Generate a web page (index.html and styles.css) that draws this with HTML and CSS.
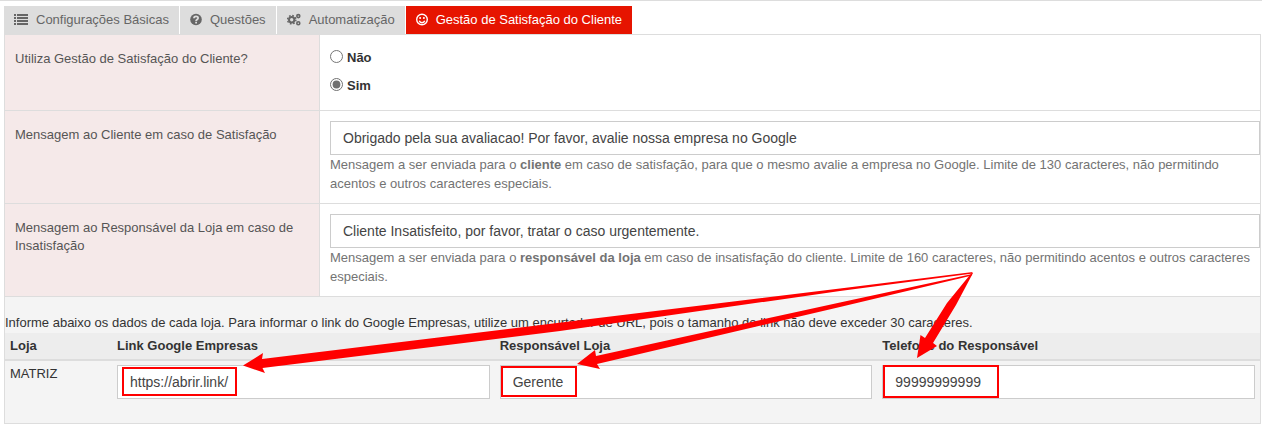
FILE: index.html
```html
<!DOCTYPE html>
<html lang="pt-BR">
<head>
<meta charset="utf-8">
<title>Gestão de Satisfação do Cliente</title>
<link rel="stylesheet" href="styles.css">
</head>
<body>
<main class="page">
  <nav class="tabs">
    <a class="tab" href="#config"><svg class="icon" viewBox="0 0 14 14"><path d="M0 1h2v2H0zM3 1h11v2H3zM0 4h2v2H0zM3 4h11v2H3zM0 7h2v2H0zM3 7h11v2H3zM0 10h2v2H0zM3 10h11v2H3z"/></svg>Configurações Básicas</a>
    <a class="tab" href="#questoes"><svg class="icon round" viewBox="0 0 12 14"><circle cx="6" cy="6.500" r="5.800"/><path class="cut" d="M4 5.200C4 2.900 8.100 2.900 8.100 5C8.100 6.500 6.100 6.300 6.100 7.900M6.100 8.700v1.800"/></svg>Questões</a>
    <a class="tab" href="#auto"><svg class="icon" viewBox="0 0 14 14"><circle class="gear" cx="4.700" cy="6.700" r="2.700"/><circle class="teeth" cx="4.700" cy="6.700" r="4.200"/><circle class="gear small" cx="11.300" cy="3.100" r="1.500"/><circle class="gear small" cx="11.300" cy="10.300" r="1.500"/></svg>Automatização</a>
    <a class="tab active" href="#satisfacao" aria-current="page"><svg class="icon round" viewBox="0 0 12 14"><circle class="line" cx="6" cy="6.500" r="5.300"/><path class="line" d="M3.300 7.800C4 10.300 8 10.300 8.700 7.800"/><circle cx="4.100" cy="4.900" r="1"/><circle cx="7.900" cy="4.900" r="1"/></svg>Gestão de Satisfação do Cliente</a>
  </nav>
  <form class="panel">
    <div class="row">
      <div class="label" id="usa">Utiliza Gestão de Satisfação do Cliente?</div>
      <div class="field choices" role="radiogroup" aria-labelledby="usa">
        <label class="choice"><input type="radio" name="usa" value="nao">Não</label>
        <label class="choice"><input type="radio" name="usa" value="sim" checked>Sim</label>
      </div>
    </div>
    <div class="row">
      <label class="label" for="msg-cliente">Mensagem ao Cliente em caso de Satisfação</label>
      <div class="field">
        <input class="text" id="msg-cliente" type="text" value="Obrigado pela sua avaliacao! Por favor, avalie nossa empresa no Google">
        <p class="help">Mensagem a ser enviada para o <b>cliente</b> em caso de satisfação, para que o mesmo avalie a empresa no Google. Limite de 130 caracteres, não permitindo acentos e outros caracteres especiais.</p>
      </div>
    </div>
    <div class="row">
      <label class="label" for="msg-loja">Mensagem ao Responsável da Loja em caso de Insatisfação</label>
      <div class="field">
        <input class="text" id="msg-loja" type="text" value="Cliente Insatisfeito, por favor, tratar o caso urgentemente.">
        <p class="help">Mensagem a ser enviada para o <b>responsável da loja</b> em caso de insatisfação do cliente. Limite de 160 caracteres, não permitindo acentos e outros caracteres especiais.</p>
      </div>
    </div>
    <section class="stores">
      <p class="intro">Informe abaixo os dados de cada loja. Para informar o link do Google Empresas, utilize um encurtador de URL, pois o tamanho do link não deve exceder 30 caracteres.</p>
      <table class="table">
        <thead><tr><th class="store">Loja</th><th id="h-link">Link Google Empresas</th><th id="h-resp">Responsável Loja</th><th id="h-tel">Telefone do Responsável</th></tr></thead>
        <tbody><tr>
          <td>MATRIZ</td>
          <td><input class="text" type="text" aria-labelledby="h-link" value="https://abrir.link/"></td>
          <td><input class="text" type="text" aria-labelledby="h-resp" value="Gerente"></td>
          <td><input class="text" type="text" aria-labelledby="h-tel" value="99999999999"></td>
        </tr></tbody>
      </table>
    </section>
  </form>
  <svg class="notes" width="1262" height="431" viewBox="0 0 1262 431" aria-hidden="true">
    <g class="box"><rect x="123" y="368" width="113" height="27"/><rect x="502" y="367" width="74" height="29"/><rect x="884" y="366" width="114" height="31"/></g>
    <path d="M973 272L840 288.500L262 359L263 353L243 365.500L265 373L262.500 368L560 331L840 291L971 273.800z"/>
    <path d="M970 274.500L840 302.500L596 356L595 350L577 364L600 369L597 364L840 307L972 275.500z"/>
    <path d="M971.500 273L947 303L925 338L920.500 335L917 358L937 346L933 343L956 305L973 273z"/>
  </svg>
</main>
</body>
</html>
```
FILE: styles.css
```css
* { box-sizing: border-box; }
body { margin: 0; background: #fff; color: #333; font: 13px/18px "Liberation Sans", Arial, sans-serif; }
.page { position: relative; padding: 5px 1px 7px 4px; border-top: 1px solid #ddd; }
.tabs { display: flex; gap: 1px; }
.tab { display: flex; align-items: center; height: 28px; padding: 0 10px; background: #ddd; color: #666; text-decoration: none; white-space: nowrap; }
.tab.active { background: #e61400; color: #fff; }
.icon { width: 14px; height: 14px; margin-right: 8px; fill: currentColor; }
.icon.round { width: 12px; }
.cut { fill: none; stroke: #ddd; stroke-width: 1.8; }
.gear { fill: none; stroke: currentColor; stroke-width: 2; }
.gear.small { stroke-width: 1.6; }
.teeth { fill: none; stroke: currentColor; stroke-width: 1.4; stroke-dasharray: 1.7 1.6; }
.line { fill: none; stroke: currentColor; stroke-width: 1.4; }
.panel { border: 1px solid #ddd; }
.row { display: grid; grid-template-columns: 315px 1fr; border-bottom: 1px solid #ddd; }
.label { padding: 15px 10px; border-right: 1px solid #ddd; background: #f5e9e9; color: #555; }
.field { padding: 10px 0 10px 10px; }
.choices { display: flex; flex-direction: column; gap: 10px; padding-top: 14px; padding-bottom: 15px; }
.choice { display: flex; align-items: center; gap: 4px; font-weight: bold; }
.choice input { margin: 0 0 4px; accent-color: #707070; }
.text { display: block; width: 100%; height: 34px; padding: 0 12px; border: 1px solid #ccc; border-radius: 0; background: #fff; color: #444; font: 14px/20px "Liberation Sans", Arial, sans-serif; }
.help { margin: 0; color: #737373; line-height: 19px; }
.stores { background: #f4f4f4; padding-bottom: 20px; }
.intro { margin: 0; padding: 17px 0 1px; }
.table { width: 100%; table-layout: fixed; border-collapse: collapse; }
.table th, .table td { padding: 4px 5px; text-align: left; vertical-align: top; }
.table th { background: #ededed; border-bottom: 2px solid #ddd; }
.store { width: 107px; }
.notes { position: absolute; top: -1px; left: 0; fill: #f00; pointer-events: none; }
.box { fill: none; stroke: #f00; stroke-width: 2; }
```
